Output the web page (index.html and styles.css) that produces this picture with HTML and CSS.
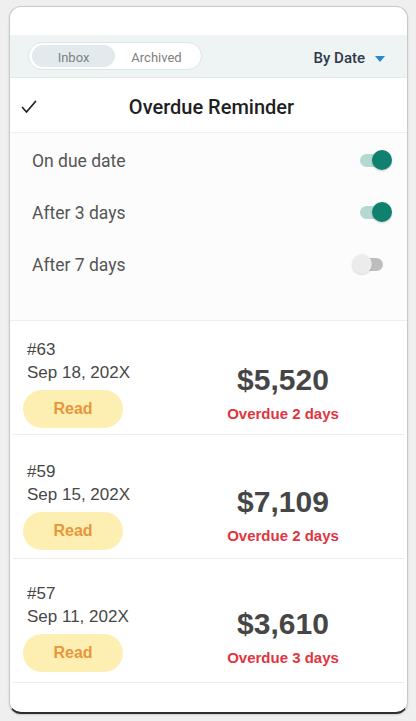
FILE: index.html
```html
<!DOCTYPE html>
<html lang="en">
<head>
<meta charset="utf-8">
<title>Overdue Reminder</title>
<link rel="stylesheet" href="styles.css">
</head>
<body>
<div class="phone">
  <div class="status"></div>
  <div class="toolbar">
    <div class="tabs">
      <div class="tab active">Inbox</div>
      <div class="tab">Archived</div>
    </div>
    <div class="sort">By Date <span class="caret"></span></div>
  </div>
  <div class="title-row">
    <svg class="check" width="16" height="14" viewBox="0 0 16 14"><polyline points="1.5,7.5 5.5,12 14.5,1.5" fill="none" stroke="#222" stroke-width="1.7" stroke-linecap="round" stroke-linejoin="round"/></svg>
    <div class="title">Overdue Reminder</div>
    <span></span>
  </div>
  <div class="toggles">
    <div class="toggle-row"><span>On due date</span><span class="switch on"><i class="track"></i><i class="thumb"></i></span></div>
    <div class="toggle-row"><span>After 3 days</span><span class="switch on"><i class="track"></i><i class="thumb"></i></span></div>
    <div class="toggle-row"><span>After 7 days</span><span class="switch off"><i class="track"></i><i class="thumb"></i></span></div>
  </div>
  <div class="cards">
    <div class="card">
      <div class="left">
        <div class="num">#63</div>
        <div class="date">Sep 18, 202X</div>
        <div class="read">Read</div>
      </div>
      <div class="right">
        <div class="amount">$5,520</div>
        <div class="overdue">Overdue 2 days</div>
      </div>
    </div>
    <div class="card">
      <div class="left">
        <div class="num">#59</div>
        <div class="date">Sep 15, 202X</div>
        <div class="read">Read</div>
      </div>
      <div class="right">
        <div class="amount">$7,109</div>
        <div class="overdue">Overdue 2 days</div>
      </div>
    </div>
    <div class="card">
      <div class="left">
        <div class="num">#57</div>
        <div class="date">Sep 11, 202X</div>
        <div class="read">Read</div>
      </div>
      <div class="right">
        <div class="amount">$3,610</div>
        <div class="overdue">Overdue 3 days</div>
      </div>
    </div>
  </div>
</div>
</body>
</html>
```

FILE: styles.css
```css
* { box-sizing: border-box; }
html, body { margin: 0; padding: 0; }
body {
  background: #efefef;
  font-family: Roboto, "Liberation Sans", Arial, sans-serif;
  width: 416px;
  height: 721px;
  overflow: hidden;
}
.phone {
  margin: 6px 0 0 9px;
  width: 399px;
  height: 708px;
  background: #fff;
  border: 1px solid #c9c9c9;
  border-bottom: 2px solid #2e2e2e;
  border-radius: 12px;
  box-shadow: 0 1px 2px rgba(0,0,0,0.15);
  overflow: hidden;
  display: flex;
  flex-direction: column;
}
.status { height: 28px; flex: none; }
.toolbar {
  flex: none;
  height: 43px;
  background: #eef3f4;
  border-bottom: 1px solid #e3e8ea;
  display: flex;
  align-items: center;
  justify-content: space-between;
  padding: 0 22px 0 18px;
}
.tabs {
  width: 174px;
  height: 28px;
  border: 1px solid #dde4e7;
  border-radius: 14px;
  background: #fff;
  padding: 2px 3px;
  display: flex;
}
.tab {
  width: 86px;
  height: 22px;
  border-radius: 11px;
  font-size: 13px;
  color: #808080;
  display: flex;
  align-items: center;
  justify-content: center;
  padding-top: 2px;
}
.tab.active { background: #e2eaee; }
.sort {
  font-size: 15px;
  font-weight: 500;
  color: #2e3a48;
  display: flex;
  align-items: center;
  padding-top: 4px;
}
.caret {
  width: 0;
  height: 0;
  margin-left: 10px;
  margin-top: 1px;
  border-left: 5px solid transparent;
  border-right: 5px solid transparent;
  border-top: 6px solid #2a86cf;
}
.title-row {
  flex: none;
  height: 55px;
  border-bottom: 1px solid #efefef;
  display: grid;
  grid-template-columns: 1fr auto 1fr;
  align-items: center;
  padding: 4px 5px 0 11px;
}
.check { display: block; }
.title {
  font-size: 20px;
  font-weight: 500;
  color: #1f1f1f;
}
.toggles {
  flex: none;
  height: 188px;
  background: #fcfcfc;
  border-bottom: 1px solid #eeeeee;
  padding: 1px 15px 30px 22px;
}
.toggle-row {
  height: 52px;
  display: flex;
  align-items: center;
  justify-content: space-between;
  font-size: 17.5px;
  color: #555;
}
.toggle-row > span:first-child { padding-top: 2px; }
.switch {
  position: relative;
  width: 34px;
  height: 20px;
  display: block;
}
.switch .track {
  position: absolute;
  left: 2px;
  top: 4px;
  width: 26px;
  height: 13px;
  border-radius: 7px;
}
.switch .thumb {
  position: absolute;
  top: 0;
  width: 20px;
  height: 20px;
  border-radius: 50%;
}
.switch.on .track { background: #b3d9d2; }
.switch.on .thumb { left: 14px; background: #10806f; box-shadow: 0 1px 2px rgba(0,0,0,0.2); }
.switch.off .track { width: 23px; background: #bdbdbd; }
.switch.off .thumb { left: -6px; background: #ececec; box-shadow: 0 1px 2px rgba(0,0,0,0.15); }
.cards { flex: none; }
.card {
  margin: 0 3px;
  border-bottom: 1px solid #ececec;
  display: flex;
  padding: 25px 15px 8px 14px;
  font-family: "Liberation Sans", Arial, sans-serif;
}
.card:first-child { padding-top: 17px; padding-bottom: 6px; }
.card:last-child { padding-top: 23px; padding-bottom: 10px; }
.left { width: 150px; flex: none; }
.num, .date {
  font-size: 17px;
  line-height: 23px;
  color: #474747;
}
.read {
  margin: 6px 0 0 -4px;
  width: 100px;
  height: 38px;
  border-radius: 19px;
  background: #fdefb2;
  color: #e9953a;
  font-weight: 700;
  font-size: 16px;
  display: flex;
  align-items: center;
  justify-content: center;
}
.right {
  flex: 1;
  text-align: center;
  padding-top: 25px;
}
.amount {
  font-size: 30px;
  line-height: 34px;
  font-weight: 700;
  color: #464646;
}
.overdue {
  margin-top: 8px;
  font-size: 15px;
  line-height: 18px;
  font-weight: 700;
  color: #e2343e;
}
```
